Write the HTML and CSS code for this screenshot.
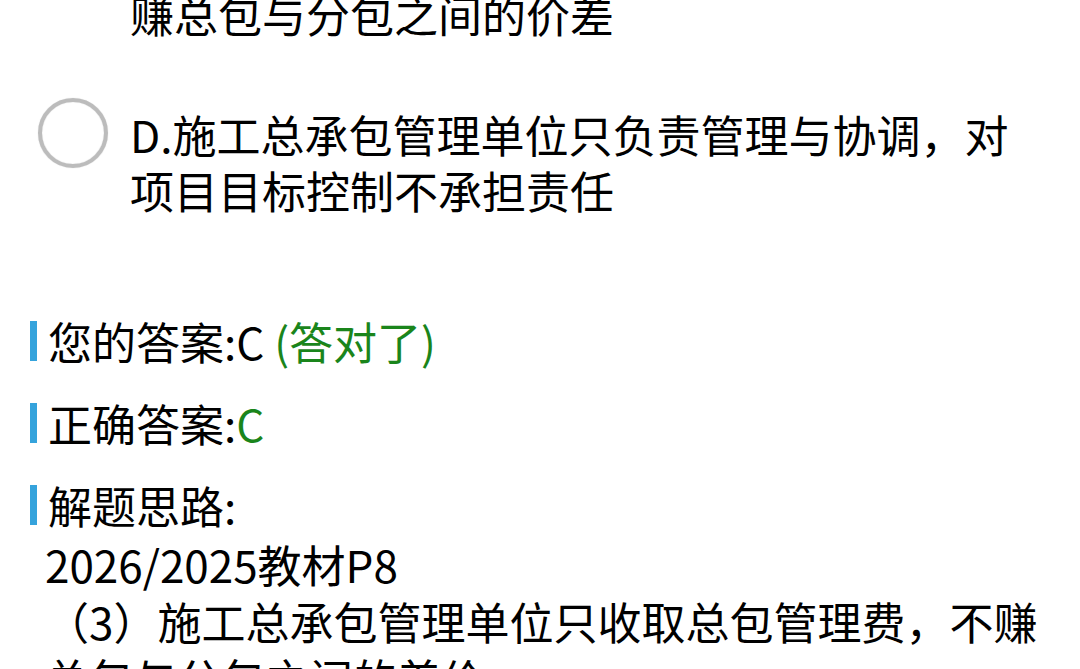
FILE: index.html
```html
<!DOCTYPE html>
<html lang="zh-CN">
<head>
<meta charset="utf-8">
<link rel="stylesheet" href="styles.css">
</head>
<body>
<div class="page">
  <div class="option">
    <span class="radio"></span>
    <div class="option-text">C.施工总承包管理单位只收取总包管理费，不赚总包与分包之间的价差</div>
  </div>
  <div class="option">
    <span class="radio"></span>
    <div class="option-text">D.施工总承包管理单位只负责管理与协调，对项目目标控制不承担责任</div>
  </div>

  <div class="answers">
    <div class="row"><span class="bar"></span>您的答案:C <span class="green">(答对了)</span></div>
    <div class="row"><span class="bar"></span>正确答案:<span class="green">C</span></div>
    <div class="row"><span class="bar"></span>解题思路:</div>
  </div>
  <div class="explain">
    <div class="line">2026/2025教材P8</div>
    <div class="line">（3）施工总承包管理单位只收取总包管理费，不赚总包与分包之间的差价</div>
  </div>
</div>
</body>
</html>
```
FILE: styles.css
```css
html, body {
  margin: 0;
  padding: 0;
  background: #ffffff;
  overflow: hidden;
}
body {
  width: 1080px;
  height: 669px;
  font-family: "Noto Sans CJK SC", "Noto Sans", sans-serif;
  color: #000;
  font-size: 44px;
}
.page {
  margin-top: -70px;
}
.option {
  display: flex;
  align-items: flex-start;
  padding-left: 38px;
  padding-right: 45px;
  margin-bottom: 64px;
}
.radio {
  flex: none;
  width: 62px;
  height: 62px;
  border: 4px solid #bcbcbc;
  border-radius: 50%;
  margin-top: -8px;
  margin-right: 22px;
  box-shadow: 0 0 1px #c8c8c8, inset 0 0 1px #c8c8c8;
}
.option-text {
  line-height: 56px;
}
.answers {
  margin-top: 95px;
  padding-left: 30px;
}
.row {
  display: flex;
  align-items: center;
  line-height: 56px;
  margin-bottom: 26px;
  white-space: pre;
}
.row:last-child {
  margin-bottom: 0;
}
.bar {
  display: inline-block;
  width: 7px;
  height: 40px;
  background: #35a3dc;
  margin-right: 11px;
}
.green {
  color: #1a851b;
}
.explain {
  margin-top: 3px;
  padding-left: 45px;
  padding-right: 20px;
}
.explain .line {
  line-height: 57px;
}
```
